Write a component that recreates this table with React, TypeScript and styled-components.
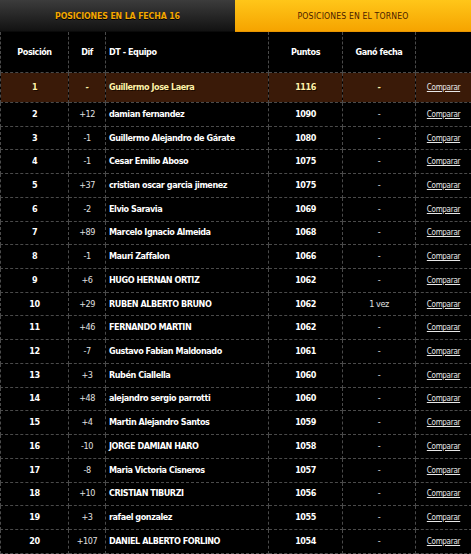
import React from "react";
import styled, { createGlobalStyle } from "styled-components";

const Global = createGlobalStyle`
  html, body { margin: 0; padding: 0; background: #000; }
  body { width: 471px; overflow: hidden; }
`;

const FONT = `"DejaVu Sans Condensed", "Liberation Sans", sans-serif`;

const Page = styled.div`
  width: 471px;
  background: #000;
  font-family: ${FONT};
`;

const Tabs = styled.div`
  display: flex;
  height: 32px;
`;

const Tab = styled.div<{ $active?: boolean }>`
  flex: 0 0 ${(p) => (p.$active ? "236px" : "235px")};
  display: flex;
  align-items: center;
  justify-content: center;
  font-size: ${(p) => (p.$active ? "8.6px" : "8.7px")};
  text-transform: uppercase;
  letter-spacing: ${(p) => (p.$active ? "0.15px" : "-0.1px")};
  font-weight: ${(p) => (p.$active ? 400 : 700)};
  color: ${(p) => (p.$active ? "#4a1c00" : "#f4a800")};
  background: ${(p) =>
    p.$active
      ? "linear-gradient(#ffc619, #f6a400)"
      : "linear-gradient(#3c3c3c, #121212)"};
  border-bottom: 1px solid ${(p) => (p.$active ? "#e89400" : "#0a0a0a")};
  text-shadow: ${(p) => (p.$active ? "none" : "0 1px 0 #000")};
`;

const Table = styled.table`
  width: 471px;
  border-collapse: collapse;
  table-layout: fixed;
  font-size: 9px;
  letter-spacing: -0.45px;
`;

const Th = styled.th<{ $left?: boolean }>`
  height: 40px;
  padding: 0 3px;
  border: 1px dashed #4a4a4a;
  border-top: none;
  color: #fff;
  font-weight: 700;
  text-align: ${(p) => (p.$left ? "left" : "center")};
`;

const Row = styled.tr<{ $lead?: boolean }>`
  height: ${(p) => (p.$lead ? "30px" : "23.72px")};
  background: ${(p) => (p.$lead ? "#3a1a08" : "#000")};
  color: ${(p) => (p.$lead ? "#fff1a8" : "#fff")};
  text-shadow: ${(p) => (p.$lead ? "1px 1px 0 #1a0a00" : "none")};
`;

const Td = styled.td<{ $left?: boolean; $light?: boolean }>`
  padding: 0 3px;
  line-height: 11px;
  border: 1px dashed #4a4a4a;
  text-align: ${(p) => (p.$left ? "left" : "center")};
  font-weight: ${(p) => (p.$light ? 400 : 700)};
  color: ${(p) => (p.$light ? "#e0e0e0" : "inherit")};
  white-space: nowrap;
  overflow: hidden;
`;

const Link = styled.a`
  color: #e8e8e8;
  text-decoration: underline;
  font-weight: 400;
  font-size: 8px;
  letter-spacing: -0.3px;
  text-shadow: none;
  cursor: pointer;
`;

type R = [number, string, string, number, string];

const rows: R[] = [
  [1, "-", "Guillermo Jose Laera", 1116, "-"],
  [2, "+12", "damian fernandez", 1090, "-"],
  [3, "-1", "Guillermo Alejandro de Gárate", 1080, "-"],
  [4, "-1", "Cesar Emilio Aboso", 1075, "-"],
  [5, "+37", "cristian oscar garcia jimenez", 1075, "-"],
  [6, "-2", "Elvio Saravia", 1069, "-"],
  [7, "+89", "Marcelo Ignacio Almeida", 1068, "-"],
  [8, "-1", "Mauri Zaffalon", 1066, "-"],
  [9, "+6", "HUGO HERNAN ORTIZ", 1062, "-"],
  [10, "+29", "RUBEN ALBERTO BRUNO", 1062, "1 vez"],
  [11, "+46", "FERNANDO MARTIN", 1062, "-"],
  [12, "-7", "Gustavo Fabian Maldonado", 1061, "-"],
  [13, "+3", "Rubén Ciallella", 1060, "-"],
  [14, "+48", "alejandro sergio parrotti", 1060, "-"],
  [15, "+4", "Martin Alejandro Santos", 1059, "-"],
  [16, "-10", "JORGE DAMIAN HARO", 1058, "-"],
  [17, "-8", "Maria Victoria Cisneros", 1057, "-"],
  [18, "+10", "CRISTIAN TIBURZI", 1056, "-"],
  [19, "+3", "rafael gonzalez", 1055, "-"],
  [20, "+107", "DANIEL ALBERTO FORLINO", 1054, "-"],
];

export default function App() {
  return (
    <Page>
      <Global />
      <Tabs>
        <Tab>Posiciones en la fecha 16</Tab>
        <Tab $active>Posiciones en el torneo</Tab>
      </Tabs>
      <Table>
        <colgroup>
          <col style={{ width: 68 }} />
          <col style={{ width: 37 }} />
          <col style={{ width: 163 }} />
          <col style={{ width: 74 }} />
          <col style={{ width: 73 }} />
          <col style={{ width: 56 }} />
        </colgroup>
        <thead>
          <tr>
            <Th>Posición</Th>
            <Th>Dif</Th>
            <Th $left>DT - Equipo</Th>
            <Th>Puntos</Th>
            <Th>Ganó fecha</Th>
            <Th></Th>
          </tr>
        </thead>
        <tbody>
          {rows.map(([pos, dif, name, pts, won]) => (
            <Row key={pos} $lead={pos === 1}>
              <Td>{pos}</Td>
              <Td $light={pos !== 1}>{dif}</Td>
              <Td $left>{name}</Td>
              <Td>{pts}</Td>
              <Td $light={pos !== 1}>{won}</Td>
              <Td>
                <Link>Comparar</Link>
              </Td>
            </Row>
          ))}
        </tbody>
      </Table>
    </Page>
  );
}
